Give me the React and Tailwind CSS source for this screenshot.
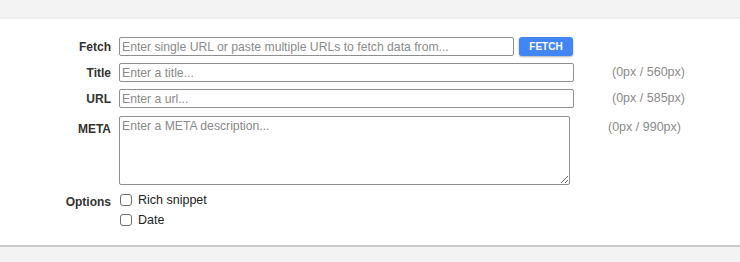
import React from "react";

const font = { fontFamily: '"Liberation Sans", Arial, Helvetica, sans-serif' };

function Label({ children, className = "" }) {
  return (
    <div className={"w-[60px] shrink-0 text-right text-[12px] font-bold text-[#333] " + className}>
      {children}
    </div>
  );
}

function Checkbox({ label }) {
  return (
    <label className="flex items-center h-[20px]">
      <span className="w-[12px] h-[12px] ml-[1px] border border-[#6f6f6f] rounded-[3px] bg-white shrink-0" />
      <span className="ml-[6px] text-[12.5px] text-[#222]">{label}</span>
    </label>
  );
}

export default function App() {
  const inputCls =
    "h-[19px] border border-[#8f8f8f] rounded-[2px] px-[2px] text-[12.2px] text-[#333] placeholder:text-[#8a8a8a] outline-none bg-white";
  return (
    <div className="w-[740px] h-[262px] bg-[#f3f3f3] flex flex-col overflow-hidden" style={font}>
      <div className="h-[17px] shrink-0 bg-[#f3f3f3]" />
      <div className="h-[230px] shrink-0 bg-white border-t-2 border-t-[#ededed] border-b-2 border-b-[#c9c9c9] shadow-[0_1px_2px_rgba(0,0,0,0.12)] pt-[18px] pl-[51px]">
        <div className="flex items-center h-[19px]">
          <Label>Fetch</Label>
          <input
            className={inputCls + " ml-[8px] w-[395px]"}
            placeholder="Enter single URL or paste multiple URLs to fetch data from..."
          />
          <button className="ml-[5px] w-[54px] h-[19px] rounded-[3px] bg-[#4285f4] text-white text-[10px] font-bold shadow-[0_1px_2px_rgba(0,0,0,0.3)] flex items-center justify-center">
            FETCH
          </button>
        </div>
        <div className="flex items-center h-[19px] mt-[7px]">
          <Label>Title</Label>
          <input className={inputCls + " ml-[8px] w-[455px]"} placeholder="Enter a title..." />
          <span className="ml-[38px] text-[12.5px] text-[#8a8a8a]">(0px / 560px)</span>
        </div>
        <div className="flex items-center h-[19px] mt-[7px]">
          <Label>URL</Label>
          <input className={inputCls + " ml-[8px] w-[455px]"} placeholder="Enter a url..." />
          <span className="ml-[38px] text-[12.5px] text-[#8a8a8a]">(0px / 585px)</span>
        </div>
        <div className="flex items-start mt-[8px]">
          <Label className="mt-[4px]">META</Label>
          <textarea
            className="ml-[8px] w-[451px] h-[69px] border border-[#8f8f8f] rounded-[2px] px-[2px] py-[1px] text-[12.2px] text-[#333] placeholder:text-[#8a8a8a] outline-none bg-white resize-y leading-[16px]"
            placeholder="Enter a META description..."
          />
          <span className="ml-[38px] mt-[2px] text-[12.5px] text-[#8a8a8a]">(0px / 990px)</span>
        </div>
        <div className="flex items-start mt-[5px]">
          <Label className="mt-[3px]">Options</Label>
          <div className="ml-[8px] flex flex-col">
            <Checkbox label="Rich snippet" />
            <Checkbox label="Date" />
          </div>
        </div>
      </div>
      <div className="flex-1 bg-[#f3f3f3]" />
    </div>
  );
}
